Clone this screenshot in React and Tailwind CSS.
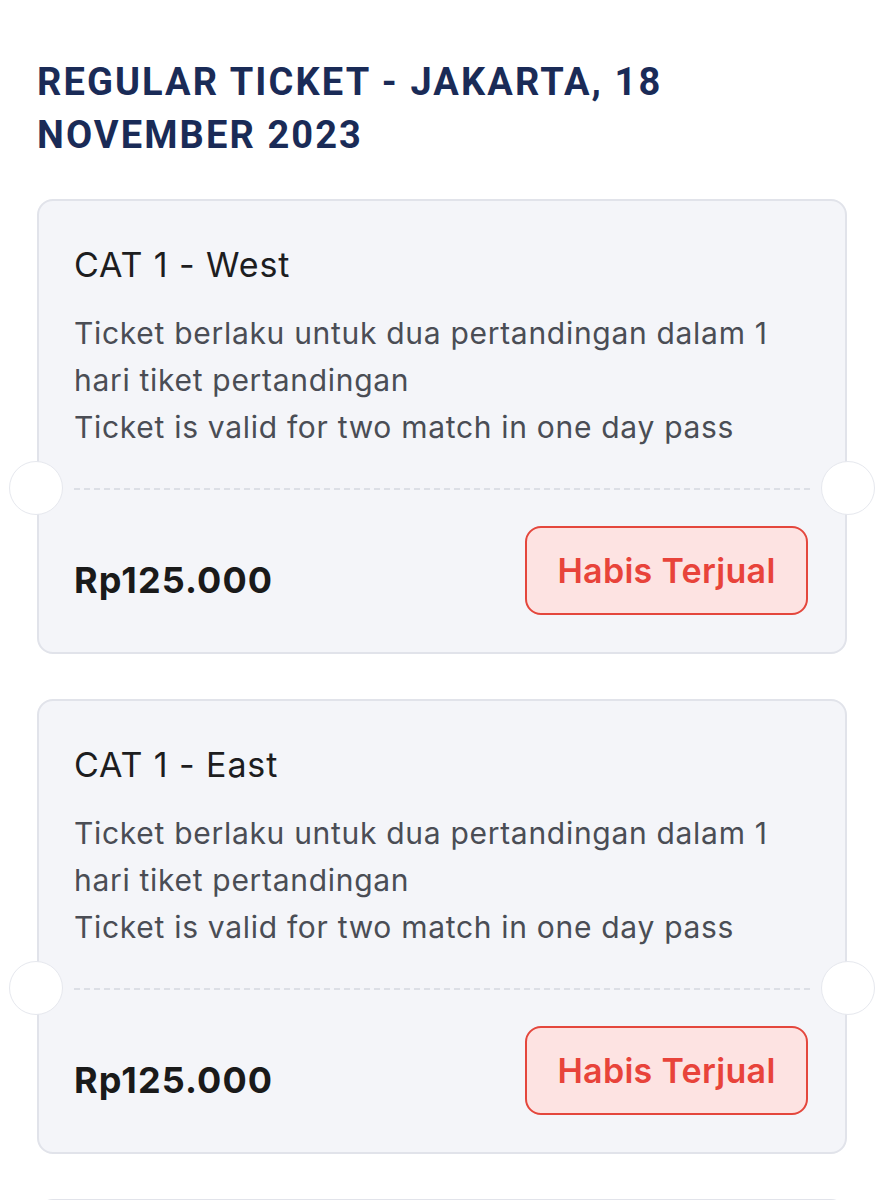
import React from "react";

function TicketCard({ title }) {
  return (
    <div className="relative rounded-[16px] border-2 border-[#e1e3ea] bg-[#f4f5f9]">
      <div className="px-[35px] pt-[44px]">
        <div className="text-[34px] leading-[40px] tracking-[0.9px] text-[#1d1d1f]">{title}</div>
        <div className="mt-[25px] text-[30px] leading-[47px] tracking-[0.7px] text-[#4a4d55]">
          <div>Ticket berlaku untuk dua pertandingan dalam 1 hari tiket pertandingan</div>
          <div>Ticket is valid for two match in one day pass</div>
        </div>
      </div>
      <div className="relative mt-[37px] h-[2px]">
        <div className="mx-[35px] border-t-2 border-dashed border-[#dcdfe6]"></div>
        <div className="absolute left-[-30px] top-[-27px] h-[54px] w-[54px] rounded-full border border-[#e6e8ee] bg-white"></div>
        <div className="absolute right-[-30px] top-[-27px] h-[54px] w-[54px] rounded-full border border-[#e6e8ee] bg-white"></div>
      </div>
      <div className="flex items-center justify-between pl-[35px] pr-[37px] pt-[36px] pb-[37px]">
        <div className="mt-[18px] text-[36px] font-bold leading-[42px] tracking-[1.1px] text-[#1a1a1a]">Rp125.000</div>
        <div className="flex h-[89px] w-[283px] items-center justify-center rounded-[16px] border-2 border-[#e4473d] bg-[#fde3e2] text-[34px] font-semibold tracking-[0.3px] text-[#e8433a]">
          Habis Terjual
        </div>
      </div>
    </div>
  );
}

export default function App() {
  return (
    <div className="h-[1200px] overflow-hidden bg-white px-[37px] pt-[56px]" style={{ fontFamily: "Inter, 'Noto Sans', sans-serif" }}>
      <h1
        className="text-[38px] font-bold uppercase leading-[53px] tracking-[2.1px] text-[#1a2b57]"
        style={{ fontFamily: "Roboto, 'Liberation Sans', sans-serif" }}
      >
        Regular Ticket - Jakarta, 18
        <br />
        November 2023
      </h1>
      <div className="mt-[37px] flex flex-col gap-[45px]">
        <TicketCard title="CAT 1 - West" />
        <TicketCard title="CAT 1 - East" />
        <div className="h-[60px] shrink-0 rounded-[16px] border-2 border-[#e1e3ea] bg-[#f4f5f9]"></div>
      </div>
    </div>
  );
}
